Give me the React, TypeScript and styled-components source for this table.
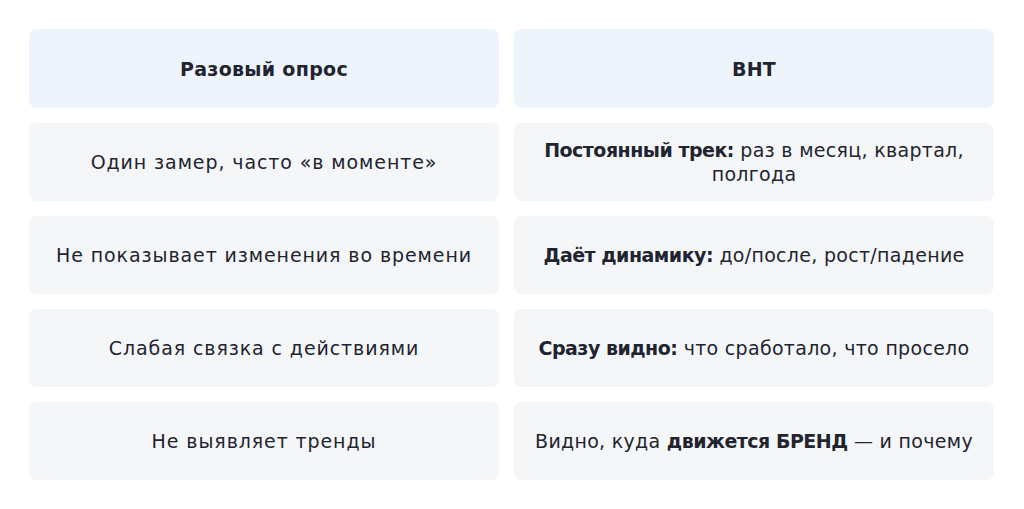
import React from 'react';
import styled, { createGlobalStyle } from 'styled-components';

const GlobalStyle = createGlobalStyle`
  html, body {
    margin: 0;
    padding: 0;
    background: #ffffff;
  }
  body {
    font-family: "DejaVu Sans", "Noto Sans", sans-serif;
    color: #1f2430;
  }
`;

const Table = styled.div`
  display: grid;
  grid-template-columns: 470px 480px;
  grid-template-rows: 79px repeat(4, 78px);
  column-gap: 15px;
  row-gap: 15px;
  padding: 29px 0 0 29px;
`;

const Cell = styled.div<{ head?: boolean; tight?: boolean }>`
  display: flex;
  align-items: center;
  justify-content: center;
  text-align: center;
  padding: 0 12px;
  border-radius: 8px;
  background: ${p => (p.head ? '#edf4fb' : '#f4f6f7')};
  font-size: 19px;
  line-height: 24px;
  letter-spacing: ${p => (p.head ? '0.3px' : p.tight ? '0.3px' : '0.9px')};
  font-weight: ${p => (p.head ? 600 : 400)};
`;

const Text = styled.span`
  display: block;
`;

const B = styled.b`
  font-weight: 600;
  letter-spacing: -0.5px;
`;

const rows: [React.ReactNode, React.ReactNode][] = [
  ['Один замер, часто «в моменте»', <><B>Постоянный трек:</B> раз в месяц, квартал, полгода</>],
  ['Не показывает изменения во времени', <><B>Даёт динамику:</B> до/после, рост/падение</>],
  ['Слабая связка с действиями', <><B>Сразу видно:</B> что сработало, что просело</>],
  ['Не выявляет тренды', <>Видно, куда <B>движется БРЕНД</B> — и почему</>],
];

export default function App() {
  return (
    <>
      <GlobalStyle />
      <Table>
        <Cell head><Text>Разовый опрос</Text></Cell>
        <Cell head><Text>ВНТ</Text></Cell>
        {rows.map(([l, r], i) => (
          <React.Fragment key={i}>
            <Cell><Text>{l}</Text></Cell>
            <Cell tight><Text>{r}</Text></Cell>
          </React.Fragment>
        ))}
      </Table>
    </>
  );
}
